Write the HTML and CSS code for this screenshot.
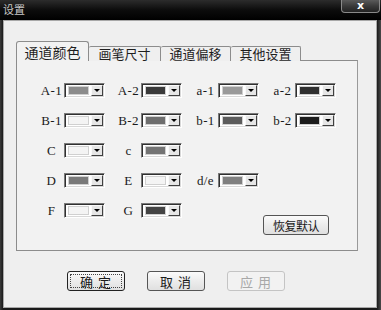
FILE: index.html
```html
<!DOCTYPE html>
<html lang="zh">
<head>
<meta charset="utf-8">
<title>设置</title>
<link rel="stylesheet" href="styles.css">
</head>
<body>
<div class="window">
  <div class="titlebar">
    <span class="title">设置</span>
    <div class="close">x</div>
  </div>
  <div class="client">
    <div class="tabs">
      <div class="tab active t1">通道颜色</div>
      <div class="tab t2">画笔尺寸</div>
      <div class="tab t3">通道偏移</div>
      <div class="tab t4">其他设置</div>
    </div>
    <div class="panel">
      <div class="grid">
        <div class="field"><span class="lbl">A-1</span><div class="combo"><span class="swatch c-a1"></span><span class="drop"></span></div></div>
        <div class="field"><span class="lbl">A-2</span><div class="combo"><span class="swatch c-a2"></span><span class="drop"></span></div></div>
        <div class="field"><span class="lbl">a-1</span><div class="combo"><span class="swatch c-la1"></span><span class="drop"></span></div></div>
        <div class="field"><span class="lbl">a-2</span><div class="combo"><span class="swatch c-la2"></span><span class="drop"></span></div></div>

        <div class="field"><span class="lbl">B-1</span><div class="combo"><span class="swatch c-light"></span><span class="drop"></span></div></div>
        <div class="field"><span class="lbl">B-2</span><div class="combo"><span class="swatch c-b2"></span><span class="drop"></span></div></div>
        <div class="field"><span class="lbl">b-1</span><div class="combo"><span class="swatch c-lb1"></span><span class="drop"></span></div></div>
        <div class="field"><span class="lbl">b-2</span><div class="combo"><span class="swatch c-lb2"></span><span class="drop"></span></div></div>

        <div class="field"><span class="lbl">C</span><div class="combo"><span class="swatch c-light"></span><span class="drop"></span></div></div>
        <div class="field"><span class="lbl">c</span><div class="combo"><span class="swatch c-lc"></span><span class="drop"></span></div></div>
        <div class="field empty"></div>
        <div class="field empty"></div>

        <div class="field"><span class="lbl">D</span><div class="combo"><span class="swatch c-d"></span><span class="drop"></span></div></div>
        <div class="field"><span class="lbl">E</span><div class="combo"><span class="swatch c-light"></span><span class="drop"></span></div></div>
        <div class="field"><span class="lbl">d/e</span><div class="combo"><span class="swatch c-de"></span><span class="drop"></span></div></div>
        <div class="field empty"></div>

        <div class="field"><span class="lbl">F</span><div class="combo"><span class="swatch c-light"></span><span class="drop"></span></div></div>
        <div class="field"><span class="lbl">G</span><div class="combo"><span class="swatch c-g"></span><span class="drop"></span></div></div>
        <div class="field empty"></div>
        <button class="btn reset">恢复默认</button>
      </div>
    </div>
    <div class="buttons">
      <button class="btn main default"><span class="focus">确 定</span></button>
      <button class="btn main">取 消</button>
      <button class="btn main disabled">应 用</button>
    </div>
  </div>
</div>
</body>
</html>
```

FILE: styles.css
```css
html, body {
  margin: 0;
  padding: 0;
  background: #111;
}

.window {
  width: 381px;
  height: 310px;
  background: linear-gradient(90deg, #3a3a3a 0, #1a1a1a 3px, #1a1a1a 377px, #4a4a4a 381px);
  display: flex;
  flex-direction: column;
  font-family: "Noto Sans CJK SC", "Noto Sans", sans-serif;
  color: #1a1a1a;
  overflow: hidden;
}

.titlebar {
  height: 20px;
  flex: none;
  display: flex;
  justify-content: space-between;
  align-items: flex-start;
  background: linear-gradient(180deg, #2c2c2c 0, #0c0c0c 10px, #000 20px);
}

.title {
  font-size: 11px;
  line-height: 12px;
  color: #c8c8c8;
  padding: 3px 0 0 3px;
}

.close {
  width: 39px;
  height: 13px;
  margin-right: 1px;
  box-sizing: border-box;
  border: 1px solid #8a8a8a;
  border-top: none;
  border-radius: 0 0 4px 4px;
  background: linear-gradient(180deg, #5a5a5a 0, #3a3a3a 50%, #222 100%);
  color: #fff;
  font-family: "DejaVu Sans", sans-serif;
  font-weight: bold;
  font-size: 11px;
  line-height: 11px;
  text-align: center;
}

.client {
  margin: 0 4px 2px 3px;
  flex: 1;
  box-sizing: border-box;
  border: 1px solid #a8a8a8;
  background: #efefef;
  padding: 21px 0 0 12px;
}

.tabs {
  display: flex;
  align-items: flex-end;
  height: 19px;
  position: relative;
  z-index: 1;
  margin-bottom: -1px;
}

.tab {
  box-sizing: border-box;
  height: 15px;
  border: 1px solid #8c8c8c;
  border-bottom: none;
  border-left: none;
  background: #efefef;
  font-size: 13px;
  line-height: 14px;
  text-align: center;
  color: #1e1e1e;
  border-radius: 2px 2px 0 0;
}

.tab.active {
  height: 20px;
  border-left: 1px solid #8c8c8c;
  background: #f2f2f2;
  font-size: 14px;
  line-height: 19px;
  border-radius: 3px 3px 0 0;
  padding-top: 1px;
}

.t1 { width: 73px; }
.t2 { width: 72px; }
.t3 { width: 70px; }
.t4 { width: 70px; }

.panel {
  width: 342px;
  height: 191px;
  box-sizing: border-box;
  border: 1px solid #8c8c8c;
  border-right-color: #9a9a9a;
  background: #f2f2f2;
  padding: 22px 0 0 23px;
}

.grid {
  display: grid;
  grid-template-columns: repeat(4, 65px);
  column-gap: 12px;
  row-gap: 15px;
  grid-auto-rows: 15px;
}

.field {
  display: flex;
  align-items: center;
  gap: 1px;
}

.lbl {
  width: 23px;
  text-align: center;
  font-family: "Liberation Serif", "DejaVu Serif", serif;
  font-size: 13px;
  line-height: 15px;
  letter-spacing: 0.4px;
  color: #1a1a1a;
}

.combo {
  width: 41px;
  height: 15px;
  box-sizing: border-box;
  display: flex;
  padding: 2px 2px 2px 3px;
  gap: 2px;
  background: #fff;
  border: 1px solid;
  border-color: #7a7a7a #ffffff #ffffff #7a7a7a;
  box-shadow: inset 1px 1px 0 #303030, inset -1px -1px 0 #d8d8d8;
}

.swatch {
  flex: 1;
  box-sizing: border-box;
  border: 1px solid #d0d0d0;
}

.drop {
  width: 12px;
  flex: none;
  box-sizing: border-box;
  background: #e6e6e6;
  border: 1px solid;
  border-color: #fafafa #404040 #404040 #fafafa;
  display: flex;
  align-items: center;
  justify-content: center;
  margin: -1px -1px -1px 0;
}

.drop::after {
  content: "";
  width: 0;
  height: 0;
  border-left: 3px solid transparent;
  border-right: 3px solid transparent;
  border-top: 3px solid #000;
}

.c-a1 { background: #8c8c8c; }
.c-a2 { background: #3a3a3a; }
.c-la1 { background: #9a9a9a; }
.c-la2 { background: #303030; }
.c-light { background: #f4f4f4; }
.c-b2 { background: #6e6e6e; }
.c-lb1 { background: #5c5c5c; }
.c-lb2 { background: #1c1c1c; }
.c-lc { background: #747474; }
.c-d { background: #7a7a7a; }
.c-de { background: #808080; }
.c-g { background: #444444; }

.btn {
  font-family: "Noto Sans CJK SC", "Noto Sans", sans-serif;
  box-sizing: border-box;
  padding: 0;
  color: #1a1a1a;
  background: linear-gradient(180deg, #fbfbfb 0, #ececec 50%, #e0e0e0 100%);
  border: 1px solid #555;
  border-radius: 3px;
  cursor: default;
}

.reset {
  grid-column: 4;
  align-self: start;
  width: 66px;
  height: 20px;
  margin: 12px 0 0 -8px;
  font-size: 12px;
  line-height: 17px;
  letter-spacing: -0.5px;
}

.buttons {
  display: flex;
  gap: 22px;
  padding: 20px 0 0 51px;
}

.main {
  width: 58px;
  height: 20px;
  font-size: 13px;
  line-height: 17px;
  letter-spacing: 1px;
}

.default {
  border: 1px solid #222;
  padding: 2px;
}

.focus {
  display: block;
  height: 100%;
  box-sizing: border-box;
  border: 1px dotted #444;
  line-height: 13px;
}

.disabled {
  color: #a8a8a8;
  border-color: #c4c4c4;
  background: #f2f2f2;
}
```
